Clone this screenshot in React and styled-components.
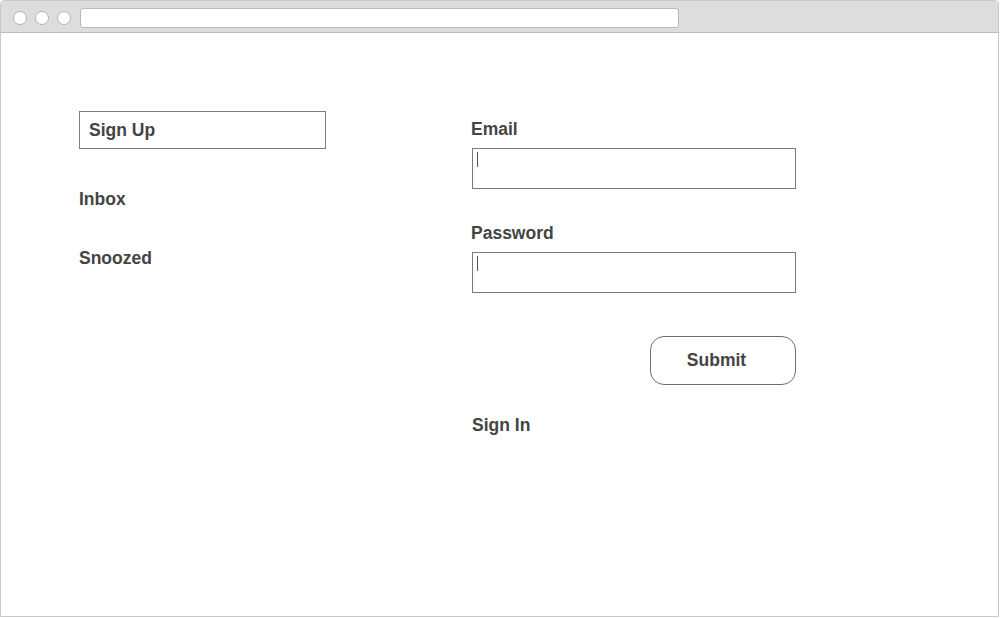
import React from 'react'
import styled, { createGlobalStyle } from 'styled-components'

const GlobalStyle = createGlobalStyle`
   html, body {
      margin: 0;
      padding: 0;
      background: #ffffff;
   }
   body {
      font-family: "Liberation Sans", Arial, sans-serif;
      color: #444444;
   }
`

const Frame = styled.div`
   box-sizing: border-box;
   width: 999px;
   height: 617px;
   border: 1px solid #c9c9c9;
   border-radius: 4px 4px 0 0;
   display: flex;
   flex-direction: column;
   overflow: hidden;
`

const TitleBar = styled.div`
   box-sizing: border-box;
   height: 32px;
   flex-shrink: 0;
   background: #dddddd;
   border-bottom: 1px solid #bdbdbd;
   display: flex;
   align-items: center;
   padding: 3px 0 0 12px;
   gap: 8px;
`

const Dot = styled.span`
   box-sizing: border-box;
   width: 14px;
   height: 14px;
   border-radius: 50%;
   background: #ffffff;
   border: 1px solid #b3b3b3;
`

const AddressBar = styled.div`
   box-sizing: border-box;
   width: 599px;
   height: 20px;
   margin-left: 1px;
   background: #ffffff;
   border: 1px solid #b8b8b8;
   border-radius: 3px;
`

const Content = styled.div`
   display: flex;
   padding: 78px 0 0 78px;
`

const Sidebar = styled.nav`
   width: 392px;
   display: flex;
   flex-direction: column;
   align-items: flex-start;
`

const Label = styled.div`
   font-size: 17.5px;
   font-weight: bold;
   line-height: 20px;
   color: #444444;
`

const NavBox = styled.div`
   box-sizing: border-box;
   width: 247px;
   height: 38px;
   border: 1px solid #7d7d7d;
   padding: 0 0 1px 9px;
   display: flex;
   align-items: center;
   margin-bottom: 40px;
`

const NavItem = styled(Label)`
   margin-bottom: 39px;
`

const Form = styled.form`
   width: 325px;
   margin: 8px 0 0 0;
   display: flex;
   flex-direction: column;
`

const FieldLabel = styled(Label)`
   margin-bottom: 9px;
`

const InputBox = styled.div`
   box-sizing: border-box;
   width: 324px;
   height: 41px;
   margin-left: 1px;
   border: 1px solid #7a7a7a;
   padding: 3px 0 0 4px;
   margin-bottom: ${({ $gap }) => $gap}px;
`

const Caret = styled.span`
   display: block;
   width: 1px;
   height: 15px;
   background: #555555;
`

const SubmitButton = styled.button`
   box-sizing: border-box;
   align-self: flex-end;
   width: 146px;
   height: 49px;
   border: 1px solid #6e6e6e;
   border-radius: 14px;
   background: #ffffff;
   font-family: "Liberation Sans", Arial, sans-serif;
   font-size: 17.5px;
   font-weight: bold;
   color: #444444;
   padding: 0 13px 0 0;
   margin-bottom: 30px;
`

const SignInLink = styled(Label)`
   margin-left: 1px;
`

const App = () => (
   <>
      <GlobalStyle />
      <Frame>
         <TitleBar>
            <Dot />
            <Dot />
            <Dot />
            <AddressBar />
         </TitleBar>
         <Content>
            <Sidebar>
               <NavBox>
                  <Label>Sign Up</Label>
               </NavBox>
               <NavItem>Inbox</NavItem>
               <NavItem>Snoozed</NavItem>
            </Sidebar>
            <Form onSubmit={(e) => e.preventDefault()}>
               <FieldLabel>Email</FieldLabel>
               <InputBox $gap={34}>
                  <Caret />
               </InputBox>
               <FieldLabel>Password</FieldLabel>
               <InputBox $gap={43}>
                  <Caret />
               </InputBox>
               <SubmitButton type="submit">Submit</SubmitButton>
               <SignInLink>Sign In</SignInLink>
            </Form>
         </Content>
      </Frame>
   </>
)

export default App
